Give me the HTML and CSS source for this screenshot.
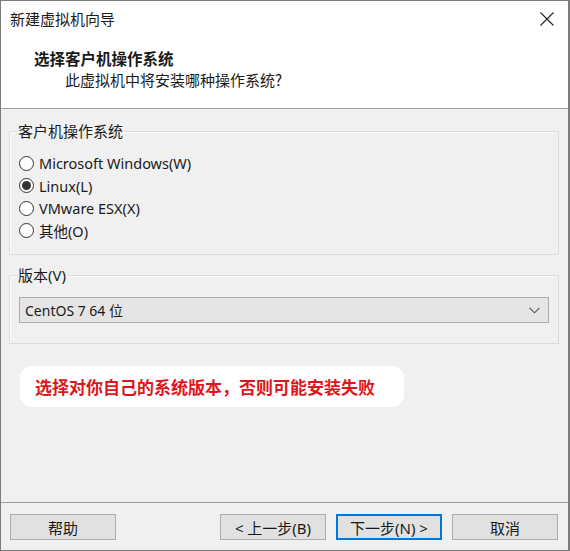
FILE: index.html
```html
<!DOCTYPE html>
<html lang="zh-CN">
<head>
<meta charset="utf-8">
<title>新建虚拟机向导</title>
<link rel="stylesheet" href="styles.css">
</head>
<body>
<div class="window">
  <div class="titlebar">
    <span class="title">新建虚拟机向导</span>
    <svg class="close" width="14" height="14" viewBox="0 0 14 14"><path d="M0.5 0.5 L13.5 13.5 M13.5 0.5 L0.5 13.5" stroke="#222" stroke-width="1.1" fill="none"/></svg>
  </div>
  <div class="header">
    <div class="heading">选择客户机操作系统</div>
    <div class="subheading">此虚拟机中将安装哪种操作系统?</div>
  </div>
  <div class="body">
    <fieldset class="group group-os">
      <legend>客户机操作系统</legend>
      <div class="radios">
        <label class="radio"><span class="dot"></span>Microsoft Windows(W)</label>
        <label class="radio checked"><span class="dot"></span>Linux(L)</label>
        <label class="radio"><span class="dot"></span>VMware ESX(X)</label>
        <label class="radio"><span class="dot"></span>其他(O)</label>
      </div>
    </fieldset>
    <fieldset class="group group-ver">
      <legend>版本(V)</legend>
      <div class="select">
        <span>CentOS 7 64 位</span>
        <svg width="11" height="7" viewBox="0 0 11 7"><path d="M0.5 0.8 L5.5 5.8 L10.5 0.8" stroke="#555" stroke-width="1.1" fill="none"/></svg>
      </div>
    </fieldset>
    <div class="note">选择对你自己的系统版本，否则可能安装失败</div>
  </div>
  <div class="footer">
    <button class="btn">帮助</button>
    <div class="spacer"></div>
    <button class="btn">&lt; 上一步(B)</button>
    <button class="btn default">下一步(N) &gt;</button>
    <button class="btn">取消</button>
  </div>
</div>
</body>
</html>
```
FILE: styles.css
```css
html, body {
  margin: 0;
  padding: 0;
  background: #f0f0f0;
}
body {
  font-family: "Noto Sans", "Noto Sans CJK SC", sans-serif;
  font-size: 15px;
  color: #1a1a1a;
}
.window {
  width: 570px;
  height: 551px;
  box-sizing: border-box;
  border: 1px solid #7c7c7c;
  border-right-width: 2px;
  display: flex;
  flex-direction: column;
  background: #f0f0f0;
}
.titlebar {
  height: 35px;
  background: #fff;
  display: flex;
  align-items: center;
  justify-content: space-between;
  padding: 0 14px 0 9px;
}
.title {
  font-family: "Noto Sans CJK SC", sans-serif;
  font-size: 15px;
  line-height: 20px;
  margin-top: 1px;
}
.close {
  display: block;
  margin-top: 1px;
}
.header {
  height: 72px;
  background: #fff;
  border-bottom: 1px solid #a0a0a0;
  font-family: "Noto Sans CJK SC", sans-serif;
}
.heading {
  font-weight: bold;
  font-size: 15.5px;
  line-height: 20px;
  padding: 12px 0 0 33px;
}
.subheading {
  font-size: 15px;
  line-height: 20px;
  padding: 2px 0 0 64px;
}
.body {
  flex: 1;
  padding: 0 9px 0 8px;
}
.group {
  margin: 0;
  border: 1px solid #dcdcdc;
  box-shadow: inset 1px 1px 0 #fafafa;
  padding: 0;
}
.group legend {
  font-family: "Noto Sans", "Noto Sans CJK SC", sans-serif;
  padding: 0 1px 0 0;
  margin-left: 8px;
  line-height: 20px;
  font-size: 15px;
}
.group-os {
  margin-top: 12px;
  height: 134px;
  box-sizing: border-box;
}
.radios {
  display: flex;
  flex-direction: column;
  padding: 11px 0 0 9px;
}
.radio {
  display: flex;
  align-items: center;
  height: 22.5px;
  font-size: 14.5px;
  gap: 5px;
}
.dot {
  width: 13px;
  height: 13px;
  border: 1px solid #333;
  border-radius: 50%;
  background: #fff;
  display: flex;
  align-items: center;
  justify-content: center;
}
.checked .dot::after {
  content: "";
  width: 9px;
  height: 9px;
  border-radius: 50%;
  background: #333;
}
.group-ver {
  margin-top: 10px;
  height: 79px;
  box-sizing: border-box;
}
.select {
  margin: 12px 9px 0 9px;
  height: 26px;
  box-sizing: border-box;
  border: 1px solid #adadad;
  background: #e5e5e5;
  display: flex;
  align-items: center;
  justify-content: space-between;
  padding: 0 8px 0 5px;
  font-size: 14px;
}
.note {
  margin: 22px 0 0 11px;
  width: 384px;
  height: 41px;
  box-sizing: border-box;
  background: #fff;
  border-radius: 12px;
  display: flex;
  align-items: center;
  padding-left: 15px;
  color: #e0151b;
  font-family: "Noto Sans CJK SC", sans-serif;
  font-weight: bold;
  font-size: 17px;
}
.footer {
  height: 48px;
  border-top: 1px solid #a0a0a0;
  display: flex;
  align-items: flex-start;
  padding: 11px 10px 0 9px;
  box-sizing: border-box;
  gap: 10px;
}
.spacer {
  flex: 1;
}
.btn {
  width: 106px;
  height: 26px;
  box-sizing: border-box;
  border: 1px solid #adadad;
  background: #e1e1e1;
  font-family: "Noto Sans", "Noto Sans CJK SC", sans-serif;
  font-size: 15px;
  color: #1a1a1a;
  padding: 0;
  margin: 0;
}
.btn.default {
  border: 2px solid #0078d7;
}
```
